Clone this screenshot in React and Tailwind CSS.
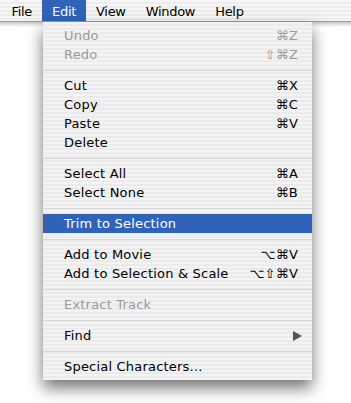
import React from "react";

const items = [
  { t: "Undo", k: "⌘Z", d: true },
  { t: "Redo", k: "⇧⌘Z", d: true },
  "sep",
  { t: "Cut", k: "⌘X" },
  { t: "Copy", k: "⌘C" },
  { t: "Paste", k: "⌘V" },
  { t: "Delete" },
  "sep",
  { t: "Select All", k: "⌘A" },
  { t: "Select None", k: "⌘B" },
  "sep",
  { t: "Trim to Selection", h: true },
  "sep",
  { t: "Add to Movie", k: "⌥⌘V" },
  { t: "Add to Selection & Scale", k: "⌥⇧⌘V" },
  "sep",
  { t: "Extract Track", d: true },
  "sep",
  { t: "Find", sub: true },
  "sep",
  { t: "Special Characters…" },
];

export default function App() {
  return (
    <div className="relative w-[351px] h-[403px] bg-white overflow-hidden font-['DejaVu_Sans',sans-serif] text-[13px] text-black">
      <div className="h-[22px] border-b border-[#9a9a9a] bg-[repeating-linear-gradient(to_bottom,#f6f6f6_0px,#f6f6f6_2px,#ececec_2px,#ececec_4px)] flex pl-[1.5px] tracking-[-0.3px]">
        {["File", "Edit", "View", "Window", "Help"].map((m) => (
          <div
            key={m}
            className={
              "h-[21px] px-[10px] pt-[2px] leading-[19px] " +
              (m === "Edit" ? "bg-[#3063b8] text-white" : "")
            }
          >
            {m}
          </div>
        ))}
      </div>
      <div className="h-[5px] bg-gradient-to-b from-[#c8c8c8] to-white" />
      <div className="absolute left-[43px] top-[22px] w-[269px] py-[4px] tracking-[0.2px] bg-[repeating-linear-gradient(to_bottom,#f3f3f3_0px,#f3f3f3_2px,#ebebeb_2px,#ebebeb_4px)] shadow-[0_8px_15px_rgba(0,0,0,0.55)]">
        {items.map((it, i) =>
          it === "sep" ? (
            <div key={i} className="h-[12px] flex flex-col justify-center">
              <div className="h-px bg-[#d6d6d6]" />
            </div>
          ) : (
            <div
              key={i}
              className={
                "h-[19px] leading-[19px] pl-[21px] pr-[14px] flex justify-between " +
                (it.h ? "bg-[#3063b8] text-white" : it.d ? "text-[#9a9a9a]" : "")
              }
            >
              <span className="whitespace-nowrap">{it.t}</span>
              {it.k && <span className="whitespace-nowrap">{it.k}</span>}
              {it.sub && (
                <svg width="9" height="10" viewBox="0 0 9 10" className="self-center -mr-[4px]">
                  <path d="M0 0 L9 5 L0 10 Z" fill="#555" />
                </svg>
              )}
            </div>
          )
        )}
      </div>
    </div>
  );
}
